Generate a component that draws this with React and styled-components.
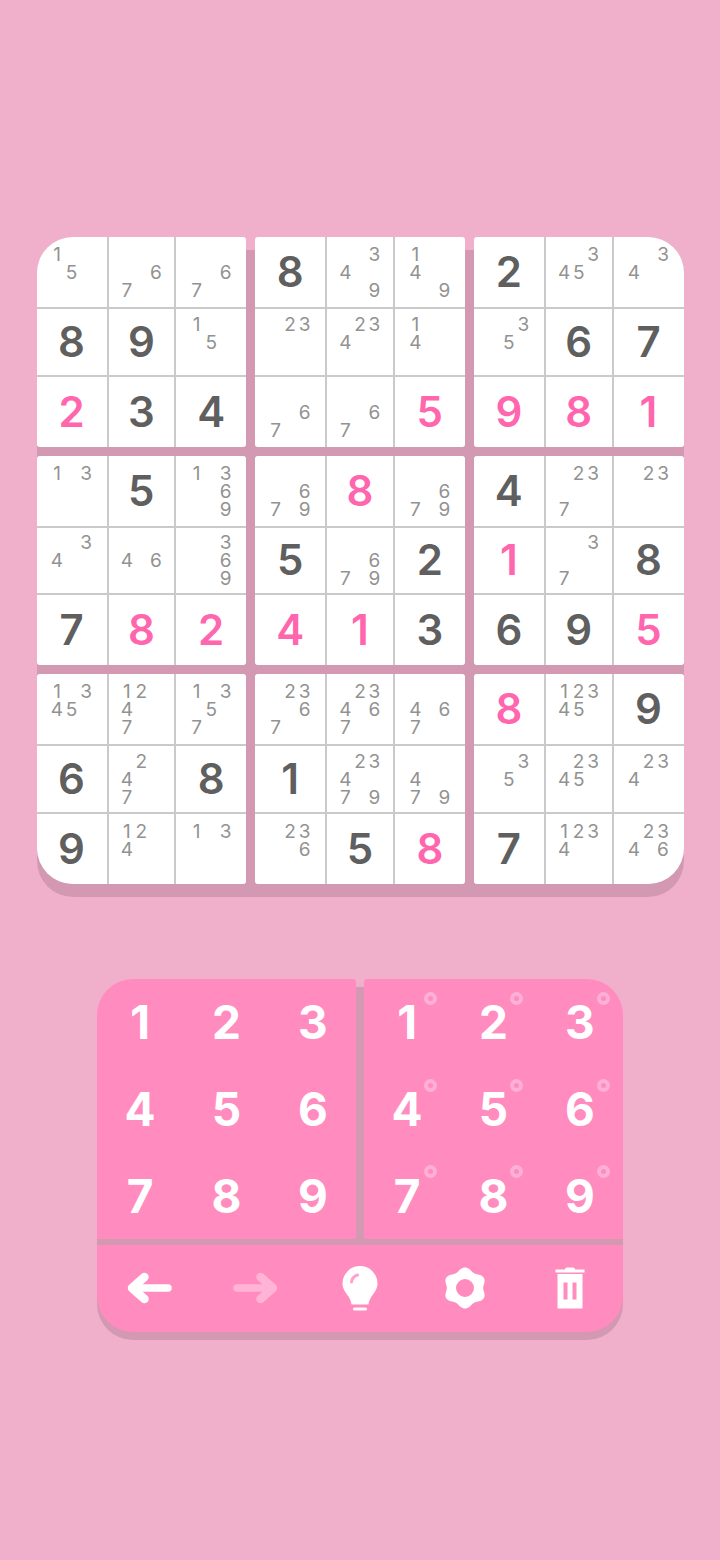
import React from "react";
import styled, { createGlobalStyle } from "styled-components";

const BG = "#f0b0cc";
const SHADE = "#d399b3";
const PINK = "#ff8bbf";
const HOT = "#ff66ae";

const GlobalStyle = createGlobalStyle`
  html, body {
    margin: 0;
    background: ${BG};
  }
  body {
    font-family: "Inter", "Noto Sans", sans-serif;
  }
`;

const Page = styled.div`
  width: 720px;
  height: 1560px;
  padding-top: 237px;
  box-sizing: border-box;
  display: flex;
  flex-direction: column;
  align-items: center;
`;

const Board = styled.div`
  position: relative;
  width: 647px;
  height: 647px;
  display: grid;
  grid-template-columns: repeat(3, 1fr);
  grid-template-rows: repeat(3, 1fr);
  gap: 9px;
  &::before {
    content: "";
    position: absolute;
    inset: 13px 0 -13px 0;
    border-radius: 36px;
    background: ${SHADE};
  }
`;

const cornerRadius = {
  tl: "36px 3px 3px 3px",
  tr: "3px 36px 3px 3px",
  bl: "3px 3px 3px 36px",
  br: "3px 3px 36px 3px",
};

const Box = styled.div`
  position: relative;
  display: grid;
  grid-template-columns: 70px 1fr 70px;
  grid-template-rows: 70px 1fr 70px;
  gap: 2px;
  background: #cacaca;
  overflow: hidden;
  border-radius: ${(p) => cornerRadius[p.$corner] || "3px"};
`;

const Cell = styled.div`
  background: #fff;
  display: flex;
  align-items: center;
  justify-content: center;
`;

const Digit = styled.span`
  font-size: 42px;
  font-weight: 600;
  line-height: 1;
  color: ${(p) => (p.$hot ? HOT : "#5f5f5f")};
`;

const Notes = styled.div`
  padding-top: 2px;
  display: grid;
  grid-template-columns: repeat(3, 14.5px);
  grid-template-rows: repeat(3, 18px);
`;

const Note = styled.span`
  grid-column: ${(p) => ((p.$n - 1) % 3) + 1};
  grid-row: ${(p) => Math.floor((p.$n - 1) / 3) + 1};
  font-size: 19px;
  line-height: 18px;
  text-align: center;
  color: #929292;
`;

const Keypad = styled.div`
  position: relative;
  width: 526px;
  height: 353px;
  margin-top: 95px;
  display: flex;
  flex-direction: column;
  gap: 6px;
  &::before {
    content: "";
    position: absolute;
    inset: 8px 0 -8px 0;
    border-radius: 36px;
    background: ${SHADE};
  }
`;

const KeyPanels = styled.div`
  position: relative;
  height: 260px;
  display: flex;
  gap: 8px;
`;

const KeyPanel = styled.div`
  flex: 1;
  display: grid;
  grid-template-columns: repeat(3, 1fr);
  grid-template-rows: repeat(3, 1fr);
  background: ${PINK};
  border-radius: ${(p) => (p.$side === "left" ? "36px 3px 3px 0" : "3px 36px 0 3px")};
`;

const Key = styled.div`
  position: relative;
  display: flex;
  align-items: center;
  justify-content: center;
  font-size: 46px;
  font-weight: 700;
  line-height: 1;
  color: #fff;
`;

const NoteMark = styled.span`
  position: absolute;
  left: 60px;
  top: 13px;
  width: 5px;
  height: 5px;
  border: 4px solid #ffb0d4;
  border-radius: 50%;
`;

const Toolbar = styled.div`
  position: relative;
  flex: 1;
  display: grid;
  grid-template-columns: repeat(5, 1fr);
  background: ${PINK};
  border-radius: 0 0 36px 36px;
`;

const Tool = styled.div`
  display: flex;
  align-items: center;
  justify-content: center;
  padding-bottom: 1px;
  opacity: ${(p) => (p.$off ? 0.35 : 1)};
`;

const boxes = [
  [
    ["15", "67", "67", "#8", "349", "149", "#2", "345", "34"],
    ["#8", "#9", "15", "23", "234", "14", "35", "#6", "#7"],
    ["!2", "#3", "#4", "67", "67", "!5", "!9", "!8", "!1"],
  ],
  [
    ["13", "#5", "1369", "679", "!8", "679", "#4", "237", "23"],
    ["34", "46", "369", "#5", "679", "#2", "!1", "37", "#8"],
    ["#7", "!8", "!2", "!4", "!1", "#3", "#6", "#9", "!5"],
  ],
  [
    ["1345", "1247", "1357", "2367", "23467", "467", "!8", "12345", "#9"],
    ["#6", "247", "#8", "#1", "23479", "479", "35", "2345", "234"],
    ["#9", "124", "13", "236", "#5", "!8", "#7", "1234", "2346"],
  ],
];

function renderCell(value, key) {
  if (value[0] === "#" || value[0] === "!") {
    return (
      <Cell key={key}>
        <Digit $hot={value[0] === "!"}>{value[1]}</Digit>
      </Cell>
    );
  }
  return (
    <Cell key={key}>
      <Notes>
        {value.split("").map((n) => (
          <Note key={n} $n={Number(n)}>{n}</Note>
        ))}
      </Notes>
    </Cell>
  );
}

function boxCells(bandIndex, stackIndex) {
  const cells = [];
  for (let r = 0; r < 3; r++) {
    for (let c = 0; c < 3; c++) {
      cells.push(boxes[bandIndex][r][stackIndex * 3 + c]);
    }
  }
  return cells;
}

const corners = { "0-0": "tl", "0-2": "tr", "2-0": "bl", "2-2": "br" };

function ArrowIcon({ flip }) {
  return (
    <svg width="46" height="32" viewBox="0 0 46 32" style={flip ? { transform: "scaleX(-1)" } : undefined}>
      <path d="M6 16H41" stroke="#fff" strokeWidth="7.5" strokeLinecap="round" fill="none" />
      <path d="M17.5 5L5 16L17.5 27" stroke="#fff" strokeWidth="8.5" strokeLinecap="round" strokeLinejoin="round" fill="none" />
    </svg>
  );
}

function BulbIcon() {
  return (
    <svg width="36" height="46" viewBox="0 -1 36 46">
      <path
        d="M18 0A17.5 17.5 0 0 1 35.5 17.5C35.5 23 32 27 29.5 30.5C27.8 33 26.8 36 26.5 38.5H9.5C9.2 36 8.2 33 6.5 30.5C4 27 0.5 23 0.5 17.5A17.5 17.5 0 0 1 18 0Z"
        fill="#fff"
      />
      <rect x="11" y="41.5" width="14" height="3" rx="1.5" fill="#fff" />
      <path d="M9.5 16C10 12.5 12 10 15.5 9" stroke={PINK} strokeWidth="3" strokeLinecap="round" fill="none" opacity="0.8" />
    </svg>
  );
}

// six soft lobes, one pointing straight up
function gearOutline() {
  const points = [];
  for (let i = 0; i < 120; i++) {
    const a = (i / 120) * Math.PI * 2;
    const r = 18.8 + 1.7 * Math.cos(6 * a);
    const x = 20 + 1.06 * r * Math.sin(a);
    const y = 21 - r * Math.cos(a);
    points.push(x.toFixed(2) + " " + y.toFixed(2));
  }
  return "M" + points.join("L") + "Z";
}

function GearIcon() {
  return (
    <svg width="40" height="42" viewBox="0 0 40 42">
      <path
        fillRule="evenodd"
        fill="#fff"
        d={gearOutline() + "M20 12A9 9 0 1 0 20 30A9 9 0 1 0 20 12Z"}
      />
    </svg>
  );
}

function TrashIcon() {
  return (
    <svg width="30" height="42" viewBox="0 0 30 42">
      <path d="M10 2.5C10 1.2 11 0.5 12 0.5H18C19 0.5 20 1.2 20 2.5H29.5V5.5H0.5V2.5Z" fill="#fff" />
      <path
        fillRule="evenodd"
        fill="#fff"
        d="M2.5 7H27.5V41.5H2.5ZM8.5 15.5V32.5H12.5V15.5ZM17.5 15.5V32.5H21.5V15.5Z"
      />
    </svg>
  );
}

const digits = [1, 2, 3, 4, 5, 6, 7, 8, 9];

function App() {
  return (
    <Page>
      <GlobalStyle />
      <Board>
        {[0, 1, 2].map((band) =>
          [0, 1, 2].map((stack) => (
            <Box key={band + "-" + stack} $corner={corners[band + "-" + stack]}>
              {boxCells(band, stack).map((value, i) => renderCell(value, i))}
            </Box>
          ))
        )}
      </Board>
      <Keypad>
        <KeyPanels>
          <KeyPanel $side="left">
            {digits.map((d) => (
              <Key key={d}>{d}</Key>
            ))}
          </KeyPanel>
          <KeyPanel $side="right">
            {digits.map((d) => (
              <Key key={d}>
                {d}
                <NoteMark />
              </Key>
            ))}
          </KeyPanel>
        </KeyPanels>
        <Toolbar>
          <Tool><ArrowIcon /></Tool>
          <Tool $off><ArrowIcon flip /></Tool>
          <Tool><BulbIcon /></Tool>
          <Tool><GearIcon /></Tool>
          <Tool><TrashIcon /></Tool>
        </Toolbar>
      </Keypad>
    </Page>
  );
}

export default App;
